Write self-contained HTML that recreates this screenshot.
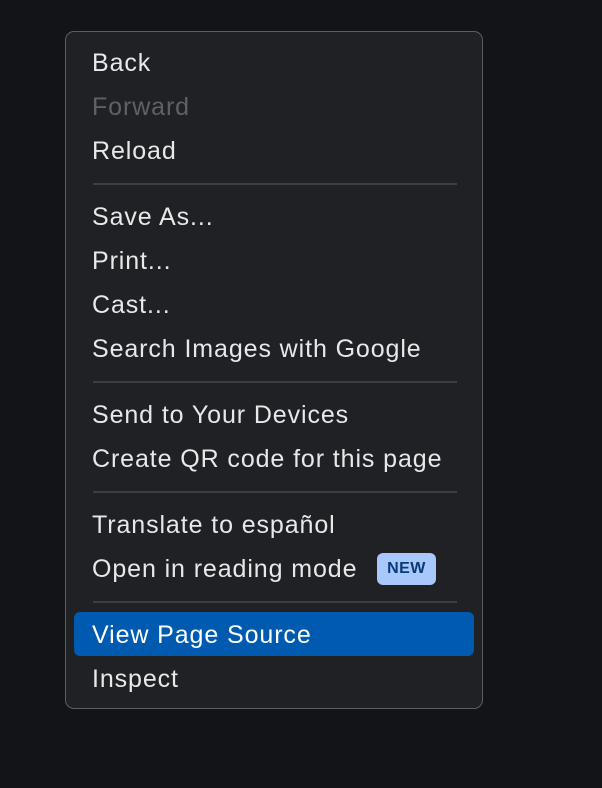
<!DOCTYPE html>
<html><head><style>
body{margin:0;width:602px;height:788px;background:#131417;font-family:"Liberation Sans",sans-serif;overflow:hidden;position:relative}
.menu{position:absolute;left:65px;top:31px;width:416px;height:676px;background:#202124;border:1px solid #5c5d60;border-radius:9px}
.it{position:absolute;left:26px;font-size:25px;color:#e8e8ea;line-height:30px;letter-spacing:0.9px;white-space:nowrap}
.dis{color:#5f6165}
.sep{position:absolute;left:27px;width:364px;height:2px;background:#3d3e41}
.hl{position:absolute;left:8px;top:580px;width:400px;height:44px;background:#005bb0;border-radius:6px}
.new{position:absolute;left:311px;top:521px;width:59px;height:32px;background:#a8c7fa;border-radius:6px;color:#0b3a78;font-weight:bold;font-size:16px;line-height:32px;text-align:center;letter-spacing:0.5px}
</style></head><body>
<div class="menu">
<div class="it" style="top:16px">Back</div>
<div class="it dis" style="top:60px">Forward</div>
<div class="it" style="top:104px">Reload</div>
<div class="sep" style="top:151px"></div>
<div class="it" style="top:170px">Save As...</div>
<div class="it" style="top:214px">Print...</div>
<div class="it" style="top:258px">Cast...</div>
<div class="it" style="top:302px">Search Images with Google</div>
<div class="sep" style="top:349px"></div>
<div class="it" style="top:368px">Send to Your Devices</div>
<div class="it" style="top:412px">Create QR code for this page</div>
<div class="sep" style="top:459px"></div>
<div class="it" style="top:478px">Translate to español</div>
<div class="it" style="top:522px">Open in reading mode</div>
<div class="new">NEW</div>
<div class="sep" style="top:569px"></div>
<div class="hl"></div>
<div class="it" style="top:588px;color:#fff">View Page Source</div>
<div class="it" style="top:632px">Inspect</div>
</div>
</body></html>
